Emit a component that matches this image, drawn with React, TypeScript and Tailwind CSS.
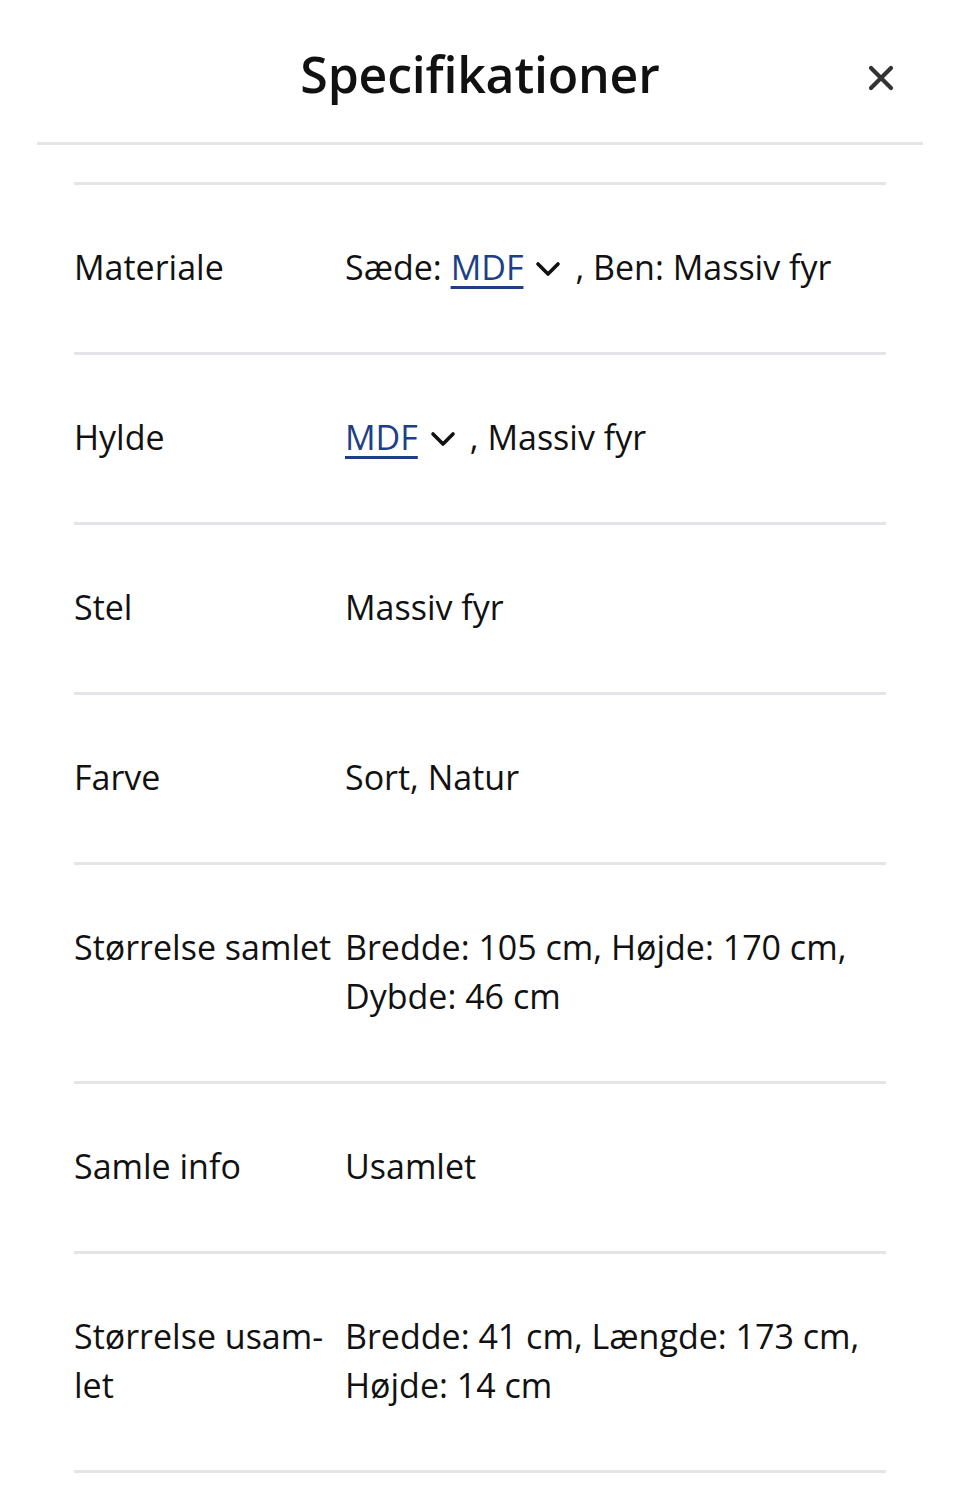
import type { ReactNode } from "react";

function Chevron() {
  return (
    <svg
      width="26"
      height="16"
      viewBox="0 0 26 16"
      className="inline-block align-middle ml-[12px] mr-[14px] -mt-[4px]"
      aria-hidden
    >
      <path d="M3 3l10 10L23 3" fill="none" stroke="#111" strokeWidth="3.6" strokeLinecap="round" strokeLinejoin="round" />
    </svg>
  );
}

function Link({ children }: { children: ReactNode }) {
  return (
    <a href="#" className="text-[#1d3f86] underline decoration-[2.5px] underline-offset-[6px]">
      {children}
    </a>
  );
}

const rows: { label: ReactNode; value: ReactNode }[] = [
  {
    label: "Materiale",
    value: (
      <>
        Sæde: <Link>MDF</Link>
        <Chevron />, Ben: Massiv fyr
      </>
    ),
  },
  {
    label: "Hylde",
    value: (
      <>
        <Link>MDF</Link>
        <Chevron />, Massiv fyr
      </>
    ),
  },
  { label: "Stel", value: "Massiv fyr" },
  { label: "Farve", value: "Sort, Natur" },
  { label: "Størrelse samlet", value: "Bredde: 105 cm, Højde: 170 cm, Dybde: 46 cm" },
  { label: "Samle info", value: "Usamlet" },
  { label: "Størrelse usam\u00ADlet", value: "Bredde: 41 cm, Længde: 173 cm, Højde: 14 cm" },
];

export default function App() {
  return (
    <div lang="da" className="w-[960px] min-h-[1492px] bg-white text-[#111] font-['Open_Sans',sans-serif]">
      <header className="mx-[37px] h-[145px] border-b-[3px] border-[#e4e4ea] flex items-center justify-center relative">
        <h2 className="text-[50px] font-semibold leading-none mt-[6px] tracking-[-0.2px]">Specifikationer</h2>
        <button className="absolute right-[28px] top-[64px] w-[28px] h-[28px] flex items-center justify-center" aria-label="Luk">
          <svg width="26" height="26" viewBox="0 0 26 26">
            <path d="M3 3l20 20M23 3L3 23" stroke="#333" strokeWidth="4.2" strokeLinecap="round" />
          </svg>
        </button>
      </header>

      <div className="mx-[74px] mt-[37px] border-t-[3px] border-[#e4e4ea]">
        {rows.map((r, i) => (
          <div
            key={i}
            className="grid grid-cols-[271px_1fr] pt-[58px] pb-[60px] border-b-[3px] border-[#e4e4ea] text-[34px] leading-[49px]"
          >
            <div className="hyphens-manual pr-[4px]">{r.label}</div>
            <div>{r.value}</div>
          </div>
        ))}
      </div>
    </div>
  );
}
